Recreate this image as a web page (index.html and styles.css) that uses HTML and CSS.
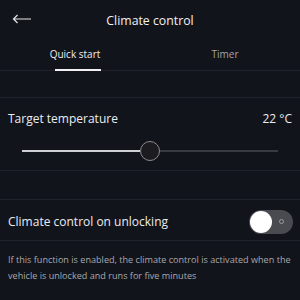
FILE: index.html
```html
<!DOCTYPE html>
<html>
<head>
<meta charset="utf-8">
<link rel="stylesheet" href="styles.css">
</head>
<body>
<div class="screen">
  <header class="topbar">
    <svg class="back" width="20" height="10" viewBox="0 0 20 10"><path d="M19 5H1.5M5.5 1L1.5 5l4 4" fill="none" stroke="#e6e6e8" stroke-width="1.2"/></svg>
    <h1 class="title">Climate control</h1>
  </header>
  <nav class="tabs">
    <div class="tab active">Quick start</div>
    <div class="tab">Timer</div>
  </nav>
  <div class="spacer"></div>
  <section class="temp">
    <div class="row">
      <span class="label">Target temperature</span>
      <span class="value">22 °C</span>
    </div>
    <div class="slider">
      <div class="track-on"></div>
      <div class="thumb"></div>
      <div class="track-off"></div>
    </div>
  </section>
  <div class="spacer s2"></div>
  <section class="unlock">
    <span class="label">Climate control on unlocking</span>
    <div class="toggle"><div class="knob"></div><div class="off-mark"></div></div>
  </section>
  <p class="desc">If this function is enabled, the climate control is activated when the vehicle is unlocked and runs for five minutes</p>
</div>
</body>
</html>
```
FILE: styles.css
```css
html, body {
  margin: 0;
  padding: 0;
  background: #12141b;
}
.screen {
  width: 300px;
  height: 300px;
  overflow: hidden;
  font-family: "Open Sans", "Noto Sans", sans-serif;
  color: #ececee;
}
.topbar {
  height: 40px;
  display: flex;
  align-items: center;
  justify-content: center;
  position: relative;
}
.back {
  position: absolute;
  left: 12px;
  top: 14px;
}
.title {
  margin: 0;
  font-size: 12.3px;
  font-weight: 400;
  color: #f0f0f2;
}
.tabs {
  display: grid;
  grid-template-columns: 1fr 1fr;
  height: 30px;
  border-bottom: 1px solid #20232b;
}
.tab {
  font-size: 10px;
  color: #a3a5ab;
  display: flex;
  justify-content: center;
  align-items: center;
  padding-bottom: 3px;
  position: relative;
}
.tab.active {
  color: #eeeef0;
}
.tab.active::after {
  content: "";
  position: absolute;
  left: 55px;
  width: 46px;
  bottom: -1px;
  height: 2px;
  background: #f2f2f4;
}
.spacer {
  height: 26px;
  border-bottom: 1px solid #20232b;
}
.s2 { height: 28px; }
.temp {
  height: 73px;
  border-bottom: 1px solid #20232b;
  padding: 0 8px;
  box-sizing: border-box;
}
.row {
  display: flex;
  justify-content: space-between;
  padding-top: 12px;
  font-size: 12px;
  line-height: 18px;
}
.slider {
  display: flex;
  align-items: center;
  margin: 12px 14px 0 14px;
  height: 21px;
}
.track-on {
  width: 118px;
  height: 2px;
  background: #cfd0d4;
}
.thumb {
  width: 18px;
  height: 18px;
  border-radius: 50%;
  border: 1.5px solid #8a8b90;
  background: #1c1c20;
}
.track-off {
  flex: 1;
  height: 2px;
  background: #383a42;
}
.unlock {
  height: 41px;
  border-bottom: 1px solid #20232b;
  display: flex;
  align-items: center;
  justify-content: space-between;
  padding: 3px 7px 0 8px;
  box-sizing: border-box;
  font-size: 12px;
}
.toggle {
  width: 44px;
  height: 24px;
  border-radius: 12px;
  background: #4a4b50;
  display: flex;
  align-items: center;
  justify-content: space-between;
  padding: 0 9px 0 1px;
  box-sizing: border-box;
}
.knob {
  width: 22px;
  height: 22px;
  border-radius: 50%;
  background: #ffffff;
}
.off-mark {
  width: 3px;
  height: 3px;
  border-radius: 50%;
  border: 1px solid #9a9aa0;
}
.desc {
  margin: 11px 2px 0 8px;
  font-size: 9.1px;
  line-height: 16px;
  color: #a7a8ad;
}
```
